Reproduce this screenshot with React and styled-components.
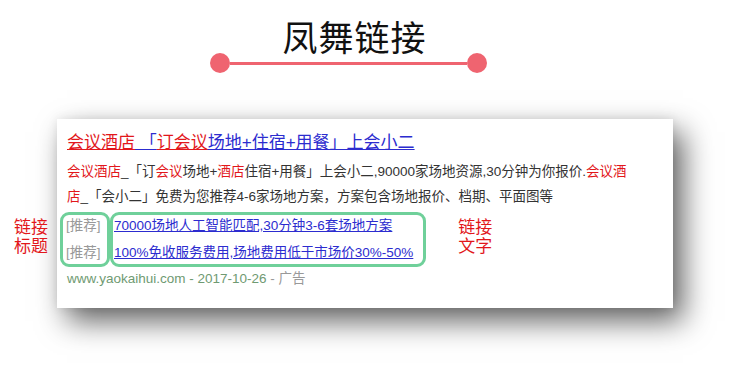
import styled, { createGlobalStyle } from 'styled-components';

const GlobalStyle = createGlobalStyle`
  html, body {
    margin: 0;
    padding: 0;
    background: #ffffff;
  }
  body {
    font-family: "Liberation Sans", "Noto Sans CJK SC", sans-serif;
  }
`;

const colors = {
  accent: '#ef6470',
  red: '#e2171b',
  link: '#2c2ccf',
  text: '#333333',
  gray: '#999999',
  url: '#6f9a72',
  frame: '#6fd09a',
};

const Page = styled.div({
  width: 739,
  height: 374,
  paddingTop: 14,
  boxSizing: 'border-box',
  overflow: 'hidden',
});

const Header = styled.div({
  marginLeft: 210,
  width: 277,
  display: 'flex',
  flexDirection: 'column',
});

const HeaderTitle = styled.h1({
  margin: 0,
  paddingLeft: 12,
  textAlign: 'center',
  fontFamily: '"Noto Sans CJK SC", sans-serif',
  fontWeight: 400,
  fontSize: 35,
  lineHeight: '44px',
  color: '#111',
  letterSpacing: 1,
});

const Divider = styled.div({
  marginTop: -5,
  height: 20,
  display: 'flex',
  alignItems: 'center',
});

const Dot = styled.span({
  width: 20,
  height: 20,
  borderRadius: '50%',
  background: colors.accent,
  flexShrink: 0,
});

const Line = styled.span({
  flex: 1,
  height: 3,
  background: colors.accent,
});

const Card = styled.div({
  marginTop: 46,
  marginLeft: 57,
  width: 616,
  height: 189,
  boxSizing: 'border-box',
  padding: '12px 10px 0',
  background: '#fff',
  boxShadow: '10px 13px 28px rgba(0,0,0,0.62), 0 0 10px rgba(0,0,0,0.08)',
  fontSize: 13.5,
  color: colors.text,
});

const AdTitle = styled.a({
  display: 'block',
  fontSize: 17,
  lineHeight: '24px',
  color: colors.link,
  textDecoration: 'underline',
  marginBottom: 4,
});

const Hit = styled.em`
  font-style: normal;
  color: ${colors.red};
  text-decoration: ${p => (p.$underline ? 'underline' : 'none')};
`;

const Desc = styled.div({
  lineHeight: '25px',
});

const Links = styled.div({
  position: 'relative',
  marginLeft: -7,
  marginTop: 3,
  display: 'flex',
  alignItems: 'flex-start',
});

const Frame = styled.div`
  border: 3px solid ${colors.frame};
  border-radius: 9px;
  display: flex;
  flex-direction: column;
  gap: 5px;
  padding: ${p => p.$pad};
  width: ${p => p.$width || 'auto'};
  box-sizing: border-box;
`;

const Tag = styled.span({
  lineHeight: '22px',
  color: colors.gray,
});

const LinkText = styled.a({
  lineHeight: '22px',
  color: colors.link,
  textDecoration: 'underline',
  whiteSpace: 'nowrap',
});

const Note = styled.div`
  color: ${colors.red};
  font-size: 17px;
  line-height: 19px;
  padding-top: 6px;
  ${p => (p.$side === 'left' ? 'position: absolute; left: -46px; top: 0;' : 'margin-left: 32px;')}
`;

const Source = styled.div({
  lineHeight: '25px',
  marginTop: -1,
  color: colors.url,
});

const Muted = styled.span({
  color: colors.gray,
});

export default function App() {
  return (
    <Page>
      <GlobalStyle />
      <Header>
        <HeaderTitle>凤舞链接</HeaderTitle>
        <Divider>
          <Dot />
          <Line />
          <Dot />
        </Divider>
      </Header>

      <Card>
        <AdTitle>
          <Hit $underline>会议酒店</Hit> 「<Hit $underline>订会议</Hit>场地+住宿+用餐」上会小二
        </AdTitle>
        <Desc>
          <div>
            <Hit>会议酒店</Hit>_「订<Hit>会议</Hit>场地+<Hit>酒店</Hit>住宿+用餐」上会小二,90000家场地资源,30分钟为你报价.<Hit>会议酒</Hit>
          </div>
          <div>
            <Hit>店</Hit>_「会小二」免费为您推荐4-6家场地方案，方案包含场地报价、档期、平面图等
          </div>
        </Desc>

        <Links>
          <Note $side="left">
            链接
            <br />
            标题
          </Note>
          <Frame $pad="0 0 0 3px" $width="50px">
            <Tag>[推荐]</Tag>
            <Tag>[推荐]</Tag>
          </Frame>
          <Frame $pad="0 10px 0 1px">
            <LinkText>70000场地人工智能匹配,30分钟3-6套场地方案</LinkText>
            <LinkText>100%免收服务费用,场地费用低于市场价30%-50%</LinkText>
          </Frame>
          <Note>
            链接
            <br />
            文字
          </Note>
        </Links>

        <Source>
          www.yaokaihui.com - 2017-10-26 <Muted>- 广告</Muted>
        </Source>
      </Card>
    </Page>
  );
}
